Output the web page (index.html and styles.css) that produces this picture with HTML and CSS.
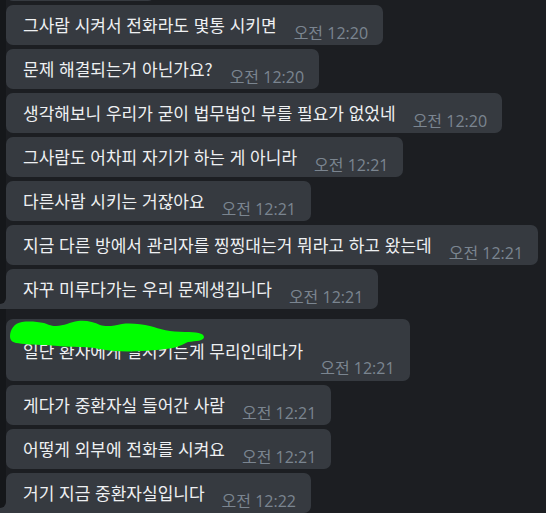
FILE: index.html
```html
<!DOCTYPE html>
<html lang="ko">
<head>
  <meta charset="UTF-8">
  <meta name="viewport" content="width=device-width, initial-scale=1.0">
  <title>채팅</title>
  <link rel="stylesheet" href="styles.css">
</head>
<body>
  <div class="chat">
    <div class="bubble cut"></div>

    <div class="bubble"><span class="text">그사람 시켜서 전화라도 몇통 시키면</span><span class="time">오전 12:20</span></div>
    <div class="bubble"><span class="text">문제 해결되는거 아닌가요?</span><span class="time">오전 12:20</span></div>
    <div class="bubble"><span class="text">생각해보니 우리가 굳이 법무법인 부를 필요가 없었네</span><span class="time">오전 12:20</span></div>
    <div class="bubble"><span class="text">그사람도 어차피 자기가 하는 게 아니라</span><span class="time">오전 12:21</span></div>
    <div class="bubble"><span class="text">다른사람 시키는 거잖아요</span><span class="time">오전 12:21</span></div>
    <div class="bubble"><span class="text">지금 다른 방에서 관리자를 찡찡대는거 뭐라고 하고 왔는데</span><span class="time">오전 12:21</span></div>
    <div class="bubble last"><span class="text">자꾸 미루다가는 우리 문제생깁니다</span><span class="time">오전 12:21</span></div>

    <!-- 새 그룹: 이름은 가려져 있음 -->
    <div class="bubble named group-start">
      <div class="name">
        <svg class="scribble" viewBox="0 -1 196 34" width="196" height="34">
          <path d="M 0 15 C 0 9, 4 2, 12 1 C 20 0, 28 1, 34 2 C 38 3, 40 5, 46 5 C 54 5, 60 1, 68 0 C 76 -1, 84 1, 90 4 C 96 6, 104 5, 112 3 C 120 2, 132 3, 140 5 C 150 8, 160 11, 175 11 C 186 11, 194 12, 194 16 C 194 20, 186 20, 178 21 C 172 24, 166 27, 156 28 C 140 30, 120 31, 104 30 C 92 29, 84 26, 72 26 C 60 26, 48 25, 36 24 C 24 24, 12 23, 6 22 C 2 21, 0 19, 0 15 Z" fill="#00ff00"/>
        </svg>
      </div>
      <div class="row"><span class="text">일단 환자에게 일시키는게 무리인데다가</span><span class="time">오전 12:21</span></div>
    </div>
    <div class="bubble"><span class="text">게다가 중환자실 들어간 사람</span><span class="time">오전 12:21</span></div>
    <div class="bubble"><span class="text">어떻게 외부에 전화를 시켜요</span><span class="time">오전 12:21</span></div>
    <div class="bubble last"><span class="text">거기 지금 중환자실입니다</span><span class="time">오전 12:22</span></div>
  </div>
</body>
</html>
```

FILE: styles.css
```css
body {
  margin: 0;
  height: 513px;
  overflow: hidden;
  background: linear-gradient(to right, #15171a 6px, #1c1e22 6px);
  font-family: "Noto Sans CJK KR", sans-serif;
}
.chat {
  display: flex;
  flex-direction: column;
  align-items: flex-start;
  gap: 4px;
  padding: 4px 0 0 6px;
}
.bubble {
  position: relative;
  display: flex;
  align-items: center;
  gap: 17px;
  height: 40px;
  padding: 0 15px 0 17px;
  background: #363a40;
  border-radius: 7px;
}
.bubble.cut {
  width: 117px;
  margin-top: -43px;
}
.bubble.last {
  border-bottom-left-radius: 0;
}
/* 말꼬리 */
.bubble.last::before,
.bubble.last::after {
  content: "";
  position: absolute;
  left: -6px;
  width: 6px;
}
.bubble.last::before {
  bottom: 0;
  height: 14px;
  background: #363a40;
}
.bubble.last::after {
  bottom: 5px;
  height: 12px;
  background: #15171a;
  border-bottom-right-radius: 6px;
}
.group-start {
  margin-top: 6px;
}
.text {
  color: #eef0f2;
  font-size: 17px;
  line-height: 20px;
  white-space: nowrap;
}
.time {
  align-self: flex-end;
  margin-bottom: 2px;
  color: #7b8590;
  font-family: "Open Sans", "Noto Sans CJK KR", sans-serif;
  font-size: 16px;
  line-height: 20px;
  white-space: nowrap;
}
.bubble.named {
  flex-direction: column;
  align-items: stretch;
  gap: 0;
  height: 62px;
}
.name {
  height: 21px;
}
.scribble {
  position: absolute;
  left: 4px;
  top: 1px;
}
.row {
  flex: 1;
  display: flex;
  gap: 17px;
}
.row .text {
  align-self: flex-start;
  line-height: 21px;
}
.row .time {
  margin-bottom: 3px;
}
```
